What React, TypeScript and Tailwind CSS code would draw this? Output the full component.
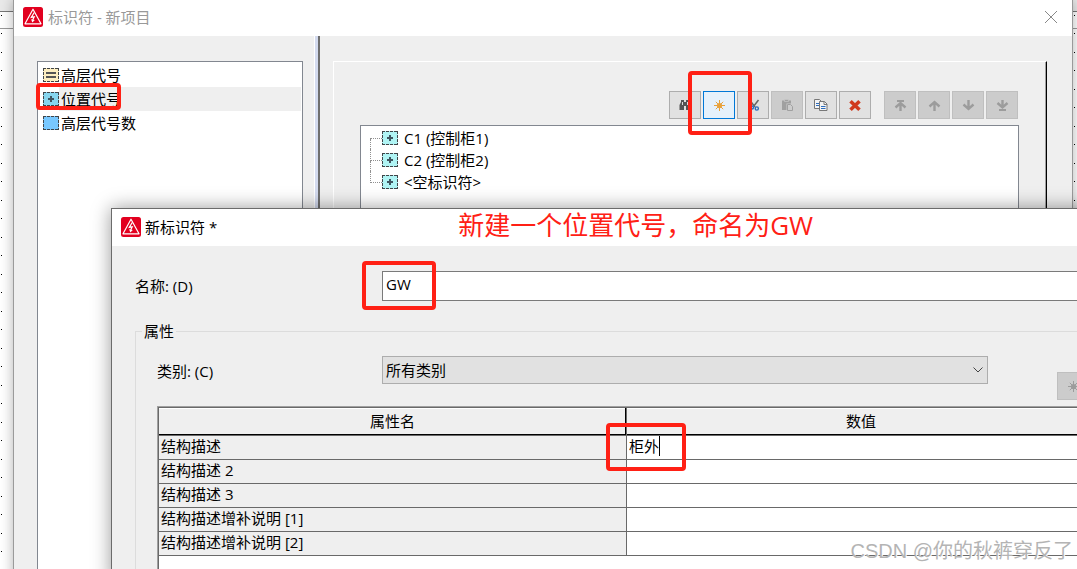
import type { ReactNode } from 'react';
import clsx from 'clsx';

type Swatch = 'cream' | 'cyan' | 'blue' | 'aqua';

const structureTypes: { name: string; swatch: Swatch; sign?: '=' | '+' }[] = [
  { name: '高层代号', swatch: 'cream', sign: '=' },
  { name: '位置代号', swatch: 'cyan', sign: '+' },
  { name: '高层代号数', swatch: 'blue' },
];

const identifiers = ['C1 (控制柜1)', 'C2 (控制柜2)', '<空标识符>'];

const properties = [
  { name: '结构描述', value: '柜外' },
  { name: '结构描述 2', value: '' },
  { name: '结构描述 3', value: '' },
  { name: '结构描述增补说明 [1]', value: '' },
  { name: '结构描述增补说明 [2]', value: '' },
];

const swatchFill: Record<Swatch, string> = {
  cream: '#fdeec0',
  cyan: '#86d5ee',
  blue: '#78c8ff',
  aqua: '#b0f4f4',
};

function AppLogo() {
  return (
    <svg viewBox="0 0 20 20" className="h-5 w-5 shrink-0" aria-hidden="true">
      <rect width="20" height="20" rx="2.5" fill="#e2001f" />
      <path d="M10 2.2 18 16.8H2Z" fill="none" stroke="#fff" strokeWidth="1.2" strokeLinejoin="round" />
      <path d="M11.2 5.5 8.3 10.4l2.9-.6-1.6 3.4" fill="none" stroke="#fff" strokeWidth="1.2" />
      <path d="m8.1 12.2 1.2 3.4 2.5-2.5Z" fill="#fff" />
    </svg>
  );
}

function NodeIcon({ swatch, sign }: { swatch: Swatch; sign?: '=' | '+' }) {
  return (
    <svg viewBox="0 0 16 14" className="h-3.5 w-4 shrink-0" shapeRendering="crispEdges" aria-hidden="true">
      <rect width="16" height="14" fill={swatchFill[swatch]} />
      <path
        d="M0 .5H16M0 13.5H16M.5 0V14M15.5 0V14"
        stroke="#404448"
        strokeDasharray="3 1"
        fill="none"
      />
      {sign === '=' && <path d="M3 5H13M3 9H13" stroke="#555" strokeWidth="2" />}
      {sign === '+' && <path d="M5 7H11M8 4V10" stroke="#3f5560" strokeWidth="2" />}
    </svg>
  );
}

function Icon({ children }: { children: ReactNode }) {
  return (
    <svg viewBox="0 0 16 16" className="h-4 w-4" fill="none" aria-hidden="true">
      {children}
    </svg>
  );
}

function StarIcon({ color }: { color: string }) {
  return (
    <Icon>
      <path d="M8.500 3V14M3 8.500H14M4.800 4.800l7.400 7.400M12.200 4.800l-7.400 7.400" stroke={color} strokeWidth="1" />
      <circle cx="8.500" cy="8.500" r="2.600" fill={color} />
    </Icon>
  );
}

/* Красная рамка-выноска */
function Mark({ className }: { className: string }) {
  return (
    <span
      className={clsx('pointer-events-none absolute z-10 rounded border-4 border-[#ff2015]', className)}
    />
  );
}

function ToolButton({
  label,
  disabled,
  active,
  children,
}: {
  label: string;
  disabled?: boolean;
  active?: boolean;
  children: ReactNode;
}) {
  return (
    <button
      type="button"
      aria-label={label}
      disabled={disabled}
      className={clsx(
        'flex h-7 w-8 shrink-0 items-center justify-center border',
        disabled && 'border-[#bfbfbf] bg-[#cccccc]',
        active && 'border-[#0078d7] bg-[#e5f1fb]',
        !disabled && !active && 'border-[#adadad] bg-[#e1e1e1]'
      )}
    >
      {children}
    </button>
  );
}

/* Точечная сетка рабочего листа */
function GridDots() {
  return (
    <svg className="h-full w-full" shapeRendering="crispEdges" aria-hidden="true">
      <defs>
        <pattern id="dots" width="1073" height="37" patternUnits="userSpaceOnUse" y="15">
          <rect x="1" width="1" height="1" fill="#000" />
          <rect x="1" y="18" width="1" height="1" fill="#000" />
        </pattern>
      </defs>
      <rect width="100%" height="100%" fill="url(#dots)" />
    </svg>
  );
}

function Toolbar() {
  return (
    <div className="mr-px flex justify-end gap-0.5">
      <ToolButton label="查找">
        <Icon>
          <path d="M4 3h3v2h2V3h3v2l1.500 3v5H9v-4H7v4H2.500V8L4 5Z" fill="#555" />
          <path d="M5.500 5v3M10.500 5v3" stroke="#ddd" />
        </Icon>
      </ToolButton>
      <div className="relative">
        <ToolButton label="新建" active>
          <StarIcon color="#e8a23c" />
        </ToolButton>
        <Mark className="-top-5 -right-[17px] -bottom-4 -left-[15px]" />
      </div>
      <ToolButton label="剪切">
        <Icon>
          <path d="M5 3.500l5 6.500M13.500 3 8.500 9.500" stroke="#666" strokeWidth="1.500" />
          <circle cx="7" cy="10.500" r="1.500" stroke="#2d6dbe" strokeWidth="1.400" />
          <circle cx="11.800" cy="11.500" r="1.600" stroke="#2d6dbe" strokeWidth="1.400" />
        </Icon>
      </ToolButton>
      <ToolButton label="粘贴" disabled>
        <Icon>
          <path d="M3 3.500h9V6.500H7.500v6.500H3Z" fill="#a0a0a0" />
          <path d="M5.500 2.500h4v2h-4Z" fill="#a0a0a0" stroke="#ccc" strokeWidth=".6" />
          <path d="M8.500 7.500h3l2 2v4h-5Z" fill="#ccc" stroke="#a0a0a0" />
        </Icon>
      </ToolButton>
      <ToolButton label="复制">
        <Icon>
          <path d="M1.500 2.500h5l2 2v7h-7Z" fill="#f4f4f4" stroke="#777" />
          <path d="M3 6.500h3M3 8.500h3" stroke="#2d6dbe" />
          <path d="M6.500 4.500h5l2.500 2.500v6.500H6.500Z" fill="#f4f4f4" stroke="#777" />
          <path d="M11 4.500V7.500H14" stroke="#777" />
          <path d="M8 9.500h4.500M8 11.500h4.500" stroke="#2d6dbe" />
        </Icon>
      </ToolButton>
      <ToolButton label="删除">
        <Icon>
          <path d="m3.500 4.300 9 8.400M12.500 4.300l-9 8.400" stroke="#d03a1e" strokeWidth="3.600" />
        </Icon>
      </ToolButton>
      <div className="ml-[11px] flex gap-0.5">
        <ToolButton label="移到最前" disabled>
          <Icon>
            <path d="M5 4h7" stroke="#9c9c9c" strokeWidth="2" />
            <path d="M3.500 10.500 8.500 6l5 4.500M8.500 7v7" stroke="#9c9c9c" strokeWidth="2.400" />
          </Icon>
        </ToolButton>
        <ToolButton label="上移" disabled>
          <Icon>
            <path d="M3.500 9.500 8.500 5l5 4.500M8.500 6v8" stroke="#9c9c9c" strokeWidth="2.400" />
          </Icon>
        </ToolButton>
        <ToolButton label="下移" disabled>
          <Icon>
            <path d="M3.500 7.500 8.500 12l5-4.500M8.500 3V11" stroke="#9c9c9c" strokeWidth="2.400" />
          </Icon>
        </ToolButton>
        <ToolButton label="移到最后" disabled>
          <Icon>
            <path d="M3.500 6 8.500 10.500 13.500 6M8.500 3V9.500" stroke="#9c9c9c" strokeWidth="2.400" />
            <path d="M5 13h7" stroke="#9c9c9c" strokeWidth="2" />
          </Icon>
        </ToolButton>
      </div>
    </div>
  );
}

function IdentifierWindow() {
  return (
    <section className="absolute top-0 right-1 -bottom-4 left-[13px] flex flex-col border-x border-[#9a9a9a] bg-[#efefef] shadow-[0_0_12px_rgba(0,0,0,0.3)]">
      <header className="flex h-9 shrink-0 items-center justify-between bg-white pr-3.5 pb-0.5 pl-[9px]">
        <div className="flex items-center gap-[5px]">
          <AppLogo />
          <h1 className="text-[#999]">标识符 - 新项目</h1>
        </div>
        <button type="button" aria-label="关闭">
          <svg viewBox="0 0 14 14" className="h-3.5 w-3.5" fill="none" stroke="#888" aria-hidden="true">
            <path d="m1 1 12 12M13 1 1 13" />
          </svg>
        </button>
      </header>

      <div className="flex min-h-0 flex-1">
        <div className="flex shrink-0 pt-[25px] pr-[11px] pl-[23px]">
          <ul className="w-[266px] border border-[#828790] bg-white p-px">
            {structureTypes.map((item, i) => (
              <li key={item.name} className="relative">
                <button type="button" className="flex h-6 w-full items-center pl-1 text-left">
                  <NodeIcon swatch={item.swatch} sign={item.sign} />
                  <span
                    className={clsx('flex h-full flex-1 items-center pl-0.5', i === 1 && 'bg-[#efefef]')}
                  >
                    {item.name}
                  </span>
                </button>
                {i === 1 && <Mark className="-top-1 -left-[3px] h-[27px] w-[85px]" />}
              </li>
            ))}
          </ul>
        </div>

        <div className="w-1.5 shrink-0 border-r-2 border-l border-l-white border-r-[#6e6e6e] bg-[#d3daee]" />

        <div className="flex min-w-0 flex-1 pt-[25px] pr-[25px] pl-[13px]">
          <div className="flex flex-1 border-t border-r border-l border-white border-r-black">
            <div className="flex flex-1 flex-col gap-1.5 border-r border-[#a0a0a0] px-[26px] pt-[29px]">
              <Toolbar />
              <ul className="flex-1 border border-[#828790] bg-white pt-px pl-[9px]">
                {identifiers.map((name, i) => (
                  <li key={name} className="flex h-[22px] items-center">
                    <span className="flex h-full w-3 flex-col">
                      <span
                        className={clsx(
                          'h-3 border-b border-dotted border-[#909090]',
                          i > 0 && 'border-l'
                        )}
                      />
                      <span
                        className={clsx(
                          'flex-1 border-dotted border-[#909090]',
                          i < identifiers.length - 1 && 'border-l'
                        )}
                      />
                    </span>
                    <NodeIcon swatch="aqua" sign="+" />
                    <span className="pl-1.5">{name}</span>
                  </li>
                ))}
              </ul>
            </div>
          </div>
        </div>
      </div>
    </section>
  );
}

function PropertyTable() {
  return (
    <div className="mt-1.5 flex-1 border-t border-l border-[#a0a0a0]">
      <div className="h-full border-t border-l border-[#696969] bg-white">
        <table className="w-full table-fixed border-separate border-spacing-0">
          <thead>
            <tr className="bg-[#efefef]">
              <th className="h-7 w-[468px] border-r border-b border-[#696969] p-0 pb-0.5 font-normal shadow-[inset_-1px_-1px_0_#000,inset_0_1px_0_#fff]">
                属性名
              </th>
              <th className="h-7 border-b border-[#696969] p-0 pb-0.5 font-normal shadow-[inset_0_-1px_0_#000,inset_0_1px_0_#fff]">
                数值
              </th>
            </tr>
          </thead>
          <tbody>
            {properties.map((row) => (
              <tr key={row.name}>
                <td className="h-6 border-r border-b border-[#696969] bg-[#efefef] pt-0 pb-[3px] pl-0.5">
                  {row.name}
                </td>
                <td className="relative h-6 border-b border-[#696969] pt-0 pb-[3px] pl-0.5">
                  <div className="flex items-center">
                    <input
                      aria-label={row.name}
                      defaultValue={row.value}
                      className={clsx('h-5 outline-none', row.value ? 'field-sizing-content' : 'w-full')}
                    />
                    {row.value && <span className="h-5 w-px bg-black" />}
                  </div>
                  {row.value && <Mark className="-top-[13px] -left-[21px] h-12 w-20" />}
                </td>
              </tr>
            ))}
          </tbody>
        </table>
      </div>
    </div>
  );
}

function NewIdentifierWindow() {
  return (
    <section className="absolute top-52 -right-16 -bottom-4 left-[111px] flex flex-col border border-[#6b6b6b] bg-[#efefef] shadow-[0_0_18px_rgba(0,0,0,0.4)]">
      <header className="flex h-[37px] shrink-0 items-center bg-white pb-0.5 pl-[9px]">
        <div className="flex items-center gap-1">
          <AppLogo />
          <h2>新标识符 *</h2>
        </div>
        <p className="pb-1 pl-[241px] text-[26px] leading-8 text-[#ff2015]">新建一个位置代号，命名为GW</p>
      </header>

      <form className="flex min-h-0 flex-1 flex-col pt-[25px] pr-6 pl-[23px]">
        <div className="flex items-center">
          <label htmlFor="name" className="w-[247px] shrink-0">
            名称: (D)
          </label>
          <div className="relative flex-1">
            <input
              id="name"
              defaultValue="GW"
              className="block h-[30px] w-full border border-[#7a7a7a] bg-white px-[3px] pb-1 outline-none"
            />
            <Mark className="-top-2.5 -left-5 h-[49px] w-[74px]" />
          </div>
        </div>

        <fieldset className="mt-5 flex min-w-0 flex-1 flex-col border border-[#dcdcdc] pr-5 pl-[21px]">
          <legend className="-ml-[15px] px-0.5">属性</legend>
          <div className="flex items-start pt-[15px]">
            <label htmlFor="category" className="w-[225px] shrink-0 pt-[5px]">
              类别: (C)
            </label>
            <div className="relative flex-1">
              <select
                id="category"
                className="block h-7 w-full appearance-none border border-[#adadad] bg-[#e1e1e1] px-[3px]"
              >
                <option>所有类别</option>
              </select>
              <svg
                viewBox="0 0 10 6"
                className="pointer-events-none absolute top-[11px] right-[5px] h-1.5 w-2.5"
                fill="none"
                stroke="#444"
                aria-hidden="true"
              >
                <path d="m.5.5 4.500 4.500L9.500.5" />
              </svg>
            </div>
            <div className="mt-4 mr-1.5 ml-[69px]">
              <ToolButton label="新建属性" disabled>
                <StarIcon color="#9c9c9c" />
              </ToolButton>
            </div>
          </div>
          <PropertyTable />
        </fieldset>
      </form>
    </section>
  );
}

export default function App() {
  return (
    <main className="relative h-screen overflow-hidden bg-white font-['Open_Sans','Noto_Sans_CJK_SC',sans-serif] text-[15px] leading-5 text-black">
      {/* Рабочий лист под окнами */}
      <div className="absolute inset-0">
        <div className="absolute inset-x-0 top-0 h-3 border-b border-[#777] bg-[#e9e9e9]" />
        <div className="absolute inset-x-0 top-7 border-t border-[#999]" />
        <div className="absolute inset-0">
          <GridDots />
        </div>
      </div>

      <IdentifierWindow />
      <NewIdentifierWindow />

      <p className="pointer-events-none absolute right-1 bottom-1 font-['Liberation_Sans','Noto_Sans_CJK_SC',sans-serif] text-xl leading-7 text-[#b4b4b4] [text-shadow:1px_1px_0_#fff]">
        CSDN @你的秋裤穿反了
      </p>
    </main>
  );
}
